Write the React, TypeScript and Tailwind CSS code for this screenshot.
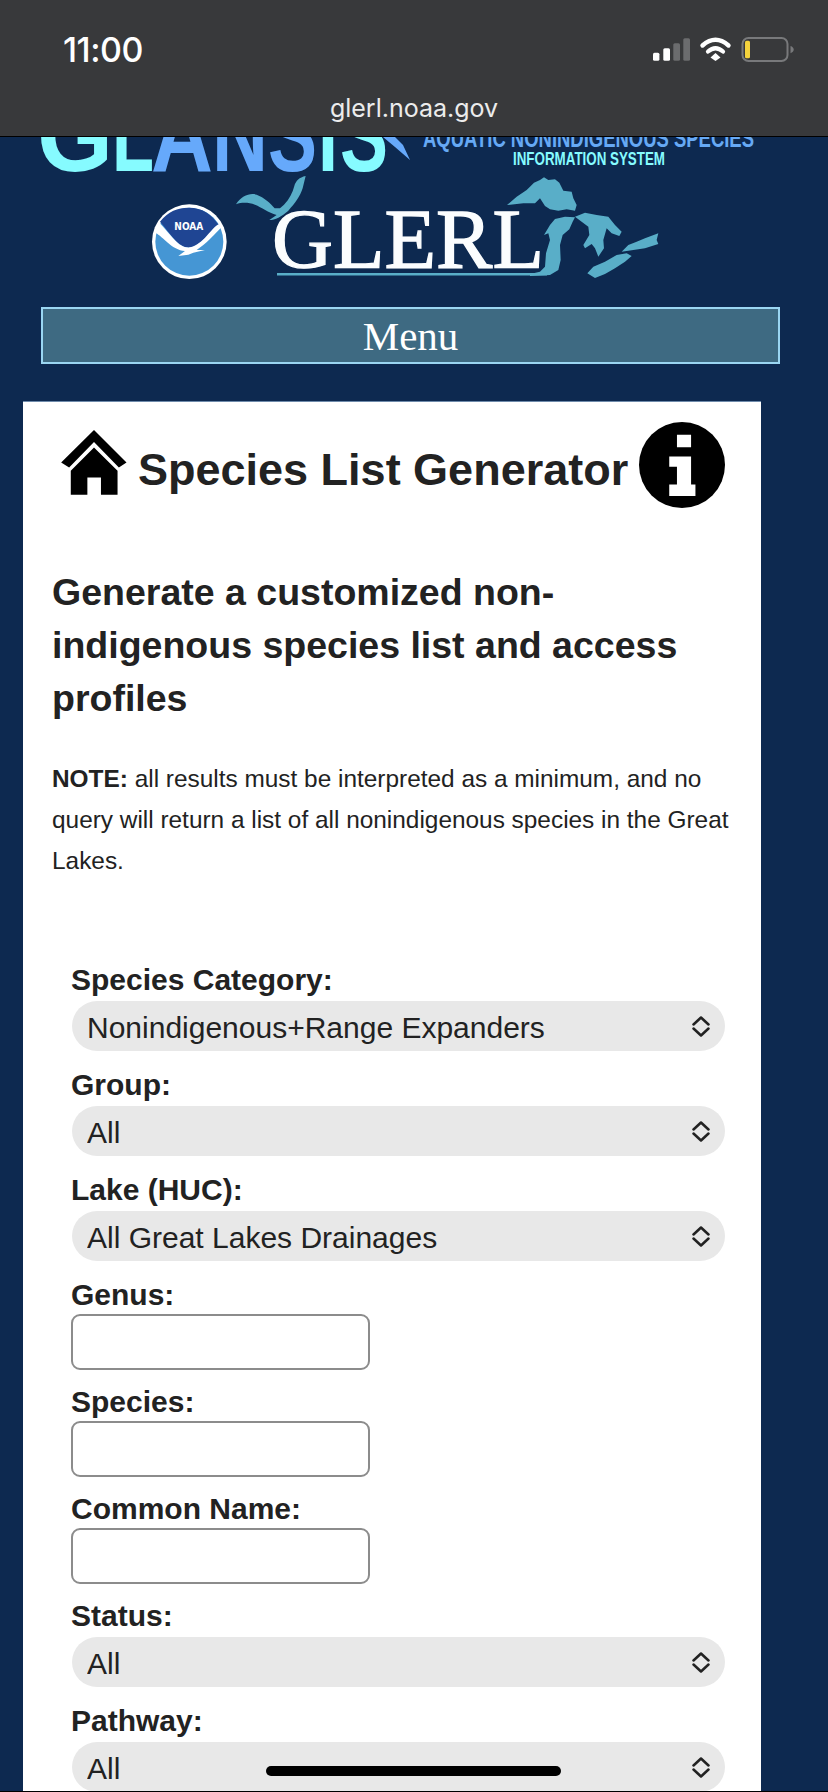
import React from 'react'

const Chevrons = () => (
    <svg viewBox="0 0 18 21" className="absolute right-[15px] top-[15px] w-[18px] h-[21px] pointer-events-none" fill="none" stroke="#222" strokeWidth="2.5" strokeLinecap="round" strokeLinejoin="round">
        <path d="M1.5 8.5 9 1.5l7.5 7" />
        <path d="M1.5 12.5 9 19.5l7.5-7" />
    </svg>
)

const SelectField = ({ label, value }: { label: string; value: string }) => (
    <div className="pb-[18px]">
        <label className="block h-8 text-[30px] leading-8 font-bold whitespace-nowrap">{label}</label>
        <div className="relative mt-[5px] ml-px w-[653px]">
            <select defaultValue={value} className="block w-full h-[50px] appearance-none rounded-[25px] bg-[#e8e8e8] pt-[3px] pl-[15px] pr-10 text-[30px] text-[#222] outline-none">
                <option>{value}</option>
            </select>
            <Chevrons />
        </div>
    </div>
)

const InputField = ({ label }: { label: string }) => (
    <div className="pb-4">
        <label className="block h-8 text-[30px] leading-8 font-bold whitespace-nowrap">{label}</label>
        <input type="text" className="block mt-[3px] w-[299px] h-14 rounded-[9px] border-2 border-[#8c8c8c] bg-white outline-none" />
    </div>
)

const StatusBar = () => (
    <div className="relative h-[137px] bg-[#38393b] border-b border-black text-white">
        <div className="pt-[31px] pl-[63px] text-[34px] leading-[38px] font-medium font-['Inter',sans-serif] tracking-[-0.5px]">11:00</div>
        <div className="mt-[24px] text-center text-[25px] leading-[30px] text-[#ececec] font-['Inter',sans-serif]">glerl.noaa.gov</div>
        <svg viewBox="620 20 200 60" className="absolute left-[620px] top-[20px] w-[200px] h-[60px]">
            <rect x="653" y="52.7" width="6.4" height="8" rx="1.5" fill="#fff" />
            <rect x="663.3" y="48.3" width="6.7" height="12.4" rx="1.5" fill="#fff" />
            <rect x="673.3" y="43.3" width="6.7" height="17.4" rx="1.5" fill="#6b6c6e" />
            <rect x="683.3" y="38.3" width="6.7" height="22.4" rx="1.5" fill="#6b6c6e" />
            <path d="M702.5 45.5Q715.5 34 728.5 45.5" fill="none" stroke="#fff" strokeWidth="4.4" strokeLinecap="round" />
            <path d="M708 51.5Q715.5 45 723 51.5" fill="none" stroke="#fff" strokeWidth="4.2" strokeLinecap="round" />
            <path d="M710.5 57.5 715.5 53 720.5 57.5 715.5 61Z" fill="#fff" />
            <rect x="742.5" y="38" width="45" height="23" rx="6" fill="none" stroke="#78797b" strokeWidth="2" />
            <rect x="745" y="40.7" width="5" height="17.6" rx="1.5" fill="#f4d23c" />
            <path d="M790.5 46c2 .6 3.2 2 3.2 3.6s-1.2 3-3.2 3.6z" fill="#78797b" />
        </svg>
    </div>
)

// clipped by the browser bar, only the lower part of the letters shows
const GlansisLogo = () => {
    const letters = [
        { c: 'G', x: 37, w: 76, fill: '#86fbff' },
        { c: 'L', x: 112, w: 42, fill: '#86fbff' },
        { c: 'A', x: 151, w: 62, fill: '#66a9fb' },
        { c: 'N', x: 212, w: 56, fill: '#66a9fb' },
        { c: 'S', x: 268, w: 49, fill: '#66a9fb' },
        { c: 'I', x: 318, w: 20, fill: '#86fbff' },
        { c: 'S', x: 340, w: 48, fill: '#86fbff' },
    ]
    return (
        <svg viewBox="0 137 828 35" className="block w-[828px] h-[35px]">
            {letters.map((l, i) => (
                <text key={i} x={l.x} y="171" fontFamily="Liberation Sans" fontWeight="700" fontSize="104" fill={l.fill} textLength={l.w} lengthAdjust="spacingAndGlyphs">{l.c}</text>
            ))}
            <path d="M383 137 395 137 403 145 410 160 395 147Z" fill="#66a9fb" />
            <text x="423" y="146.5" fontFamily="Liberation Sans" fontWeight="700" fontSize="26" fill="#66a9f5" textLength="331" lengthAdjust="spacingAndGlyphs">AQUATIC NONINDIGENOUS SPECIES</text>
            <text x="513" y="165.2" fontFamily="Liberation Sans" fontWeight="700" fontSize="19" fill="#86fbff" textLength="152" lengthAdjust="spacingAndGlyphs">INFORMATION SYSTEM</text>
        </svg>
    )
}

const GlerlLogo = () => (
    <svg viewBox="140 172 530 118" className="block ml-[140px] w-[530px] h-[118px]">
        <g transform="translate(140 170) scale(.3333)">
            <circle cx="148" cy="215" r="112" fill="#fff" />
            <circle cx="148" cy="215" r="102" fill="#4596d4" />
            <path d="M60 155C85 122 118 112 148 113 185 113 215 132 236 165 215 175 190 225 150 232 115 235 95 195 60 155Z" fill="#1f4593" />
            <path d="M46 188C70 200 95 240 135 243L115 258 145 254 160 248 195 240 170 240 190 225C215 205 230 185 245 172L236 163C215 172 190 225 150 232 115 235 95 195 58 158 50 165 46 178 46 188Z" fill="#fff" />
            <text x="103" y="179" fontFamily="DejaVu Sans" fontWeight="700" fontSize="32" fill="#fff" textLength="87" lengthAdjust="spacingAndGlyphs">NOAA</text>
            <path d="M497 18C478 22 468 32 463 48 458 68 448 88 432 104L420 115 404 115C392 100 372 82 350 74 328 68 305 78 288 103 305 97 325 97 345 104 365 112 385 128 410 135L388 150C405 150 425 140 445 122 465 100 480 80 488 55Z" fill="#59aec8" />
        </g>
        <g transform="translate(530 170) scale(.3333)" fill="#59aec8">
            <path d="M-69 105-40 80-10 60 0 50 12 38 30 30 42 22 55 30 75 28 88 38 100 62 125 65 130 85 140 105 135 122 110 118 85 122 60 118 45 108 30 85 15 100-20 100Z" />
            <path d="M135 142 105 140 75 147 60 165 42 195 55 190 60 210 48 250 45 290 30 305 0 312 0 318 60 315 85 300 92 270 90 225 98 195 118 178 128 155Z" />
            <path d="M135 140 165 128 200 135 235 140 255 165 275 185 268 198 245 190 230 175 220 210 222 235 205 260 195 235 185 222 165 235 160 225 178 195 175 170 155 155Z" />
            <path d="M172 310 190 290 225 275 260 255 290 250 305 258 285 275 255 295 225 312 195 324Z" />
            <path d="M275 245 295 225 320 215 345 205 385 190 380 210 385 222 345 235 310 240Z" />
        </g>
        <rect x="277" y="273" width="270" height="2.5" fill="#59aec8" />
        <text x="272" y="268" fontFamily="Liberation Serif" fontSize="85" fill="#fbfdfe" stroke="#fbfdfe" strokeWidth="1.3" textLength="272" lengthAdjust="spacingAndGlyphs">GLERL</text>
    </svg>
)

const HomeIcon = () => (
    <svg viewBox="33 62 198 196" className="shrink-0 w-[66px] h-[65px] mt-[13px]" fill="#000">
        <path d="M132 62 230 160 207 175 132 98 57 175 33 160Z" />
        <path d="M132 115 203 185V257H153V205H112V257H62V185Z" />
    </svg>
)

const InfoIcon = () => (
    <svg viewBox="22 22 256 256" className="shrink-0 w-[86px] h-[86px] mt-[5px]">
        <circle cx="150" cy="150" r="128" fill="#000" />
        <path d="M135 60H177V97H135ZM112 125H177V208H190V242H112V208H135V155H112Z" fill="#fff" />
    </svg>
)

export default function App() {
    return (
        <div className="relative w-[828px] h-[1792px] overflow-hidden bg-[#0d2950] font-['Liberation_Sans',Arial,sans-serif] text-[#222]">
            <StatusBar />
            <GlansisLogo />
            <GlerlLogo />
            <div className="mt-[17px] ml-[41px] w-[739px] h-[57px] border-2 border-[#9ad6f2] bg-[#3e6a82] text-center text-[41px] leading-[54px] text-white font-['Liberation_Serif',serif]">
                Menu
            </div>
            <div className="mt-[37px] ml-[23px] w-[738px] bg-white border-t border-[#6f8bab] pb-10">
                <div className="flex pl-[38px] pt-[15px]">
                    <HomeIcon />
                    <h1 className="ml-[11px] mt-[27px] text-[45px] leading-[52px] font-bold whitespace-nowrap">Species List Generator</h1>
                    <div className="ml-[11px]"><InfoIcon /></div>
                </div>
                <div className="px-[29px]">
                    <h2 className="mt-[58px] text-[37.5px] leading-[53px] font-bold">Generate a customized non-indigenous species list and access profiles</h2>
                    <p className="mt-[33px] text-[24.4px] leading-[41px]"><b>NOTE:</b> all results must be interpreted as a minimum, and no query will return a list of all nonindigenous species in the Great Lakes.</p>
                </div>
                <form className="mt-[83px] pl-[48px]">
                    <SelectField label="Species Category:" value="Nonindigenous+Range Expanders" />
                    <SelectField label="Group:" value="All" />
                    <SelectField label="Lake (HUC):" value="All Great Lakes Drainages" />
                    <InputField label="Genus:" />
                    <InputField label="Species:" />
                    <InputField label="Common Name:" />
                    <SelectField label="Status:" value="All" />
                    <SelectField label="Pathway:" value="All" />
                </form>
            </div>
            <div className="absolute left-[266px] top-[1766px] w-[295px] h-[10px] rounded-full bg-black" />
            <div className="absolute left-0 bottom-0 w-full h-px bg-black" />
        </div>
    )
}
